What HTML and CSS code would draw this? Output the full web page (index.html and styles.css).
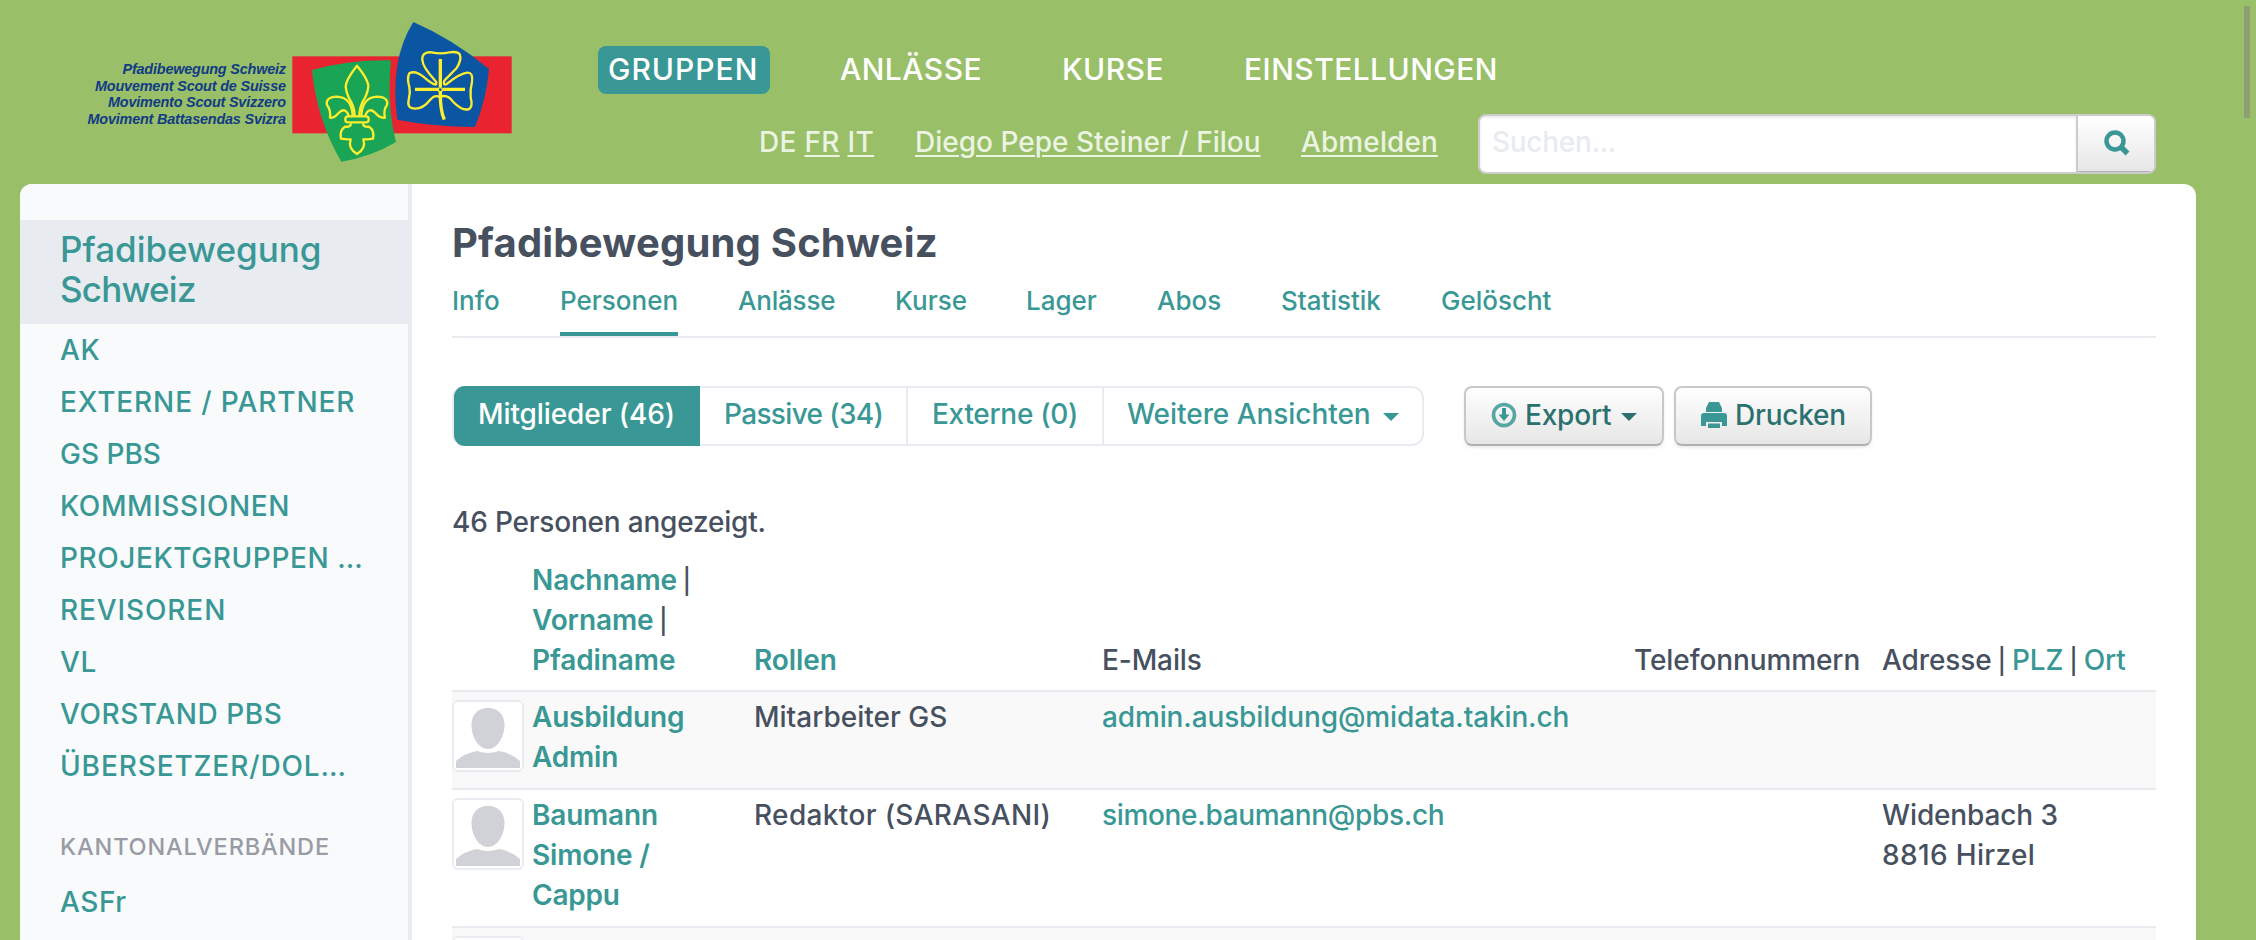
FILE: index.html
```html
<!DOCTYPE html>
<html lang="de">
<head>
<meta charset="utf-8">
<title>Pfadibewegung Schweiz</title>
<link rel="stylesheet" href="styles.css">
</head>
<body>
<header class="header">
  <svg class="logo" width="560" height="184" viewBox="0 0 560 184">
    <g class="logo-text">
      <text x="122.5" y="74" textLength="163.5">Pfadibewegung Schweiz</text>
      <text x="95" y="91" textLength="191">Mouvement Scout de Suisse</text>
      <text x="108" y="107" textLength="178">Movimento Scout Svizzero</text>
      <text x="87.5" y="124" textLength="198.5">Moviment Battasendas Svizra</text>
    </g>
    <g transform="translate(280 10) scale(.33333)">
      <rect x="37" y="139" width="658" height="231" fill="#ea2330"/>
      <path fill="#1aa455" d="M96 180Q210 148 333 151Q320 285 348 396Q275 440 184 455Q110 330 96 180Z"/>
      <path fill="#0b56a3" d="M400 36Q520 88 627 177Q620 265 585 351Q460 350 352 329Q328 150 400 36Z"/>
      <g fill="none" stroke="#fcee2e" stroke-width="7" stroke-linejoin="round">
        <path d="M224 320Q224 296 213 275Q200 255 197 230Q197 210 231 167Q266 210 265 230Q262 255 248 275Q238 295 238 320"/>
        <path d="M218 318Q216 262 170 260Q135 262 141 285Q153 300 150 323Q163 325 175 310Q195 288 207 318"/>
        <path d="M244 318Q246 262 292 260Q327 262 321 285Q309 300 315 323Q299 325 287 310Q267 288 255 318"/>
        <rect x="196" y="319" width="70" height="18" rx="8"/>
        <path d="M213 340Q213 352 195 350Q178 360 183 386Q198 389 212 388Q203 415 231 432Q259 415 250 388Q264 389 279 386Q284 360 267 350Q249 352 249 340"/>
        <path d="M466 224Q474 220 462 208Q428 170 427 150Q425 125 455 127Q482 133 508 127Q535 123 540 135Q545 150 530 174L493 212Q488 228 500 222Q540 190 562 188Q580 187 576 215Q570 240 572 262Q580 292 565 298Q545 302 520 276Q500 250 480 262Q465 252 450 270Q430 296 405 296Q380 295 386 270Q392 250 388 230Q380 205 388 190Q405 180 430 200Q455 222 466 224Z"/>
        <g stroke-width="10"><path d="M405 238H474M488 238H555M481 147V231M481 246Q480 300 493 329"/></g>
        <circle cx="481" cy="239" r="6" stroke-width="4"/>
      </g>
    </g>
  </svg>
  <div class="header-right">
    <nav class="nav">
      <a class="nav-link active t1">GRUPPEN</a>
      <a class="nav-link t2">ANLÄSSE</a>
      <a class="nav-link t3">KURSE</a>
      <a class="nav-link t4">EINSTELLUNGEN</a>
    </nav>
    <div class="meta">
      <span class="langs">DE <a>FR</a> <a>IT</a></span>
      <span class="user"><a>Diego Pepe Steiner / Filou</a></span>
      <span class="logout"><a>Abmelden</a></span>
      <div class="search">
        <div class="search-input">Suchen...</div>
        <div class="search-btn">
          <svg width="26" height="26" viewBox="0 0 26 26" fill="none" stroke="#399895"><circle cx="11" cy="11" r="8.500" stroke-width="4.500"/><path d="M17 17l6.500 6.500" stroke-width="5.500"/></svg>
        </div>
      </div>
    </div>
  </div>
  <div class="scrollbar"></div>
</header>
<div class="panel">
  <aside class="sidebar">
    <a class="side-title">Pfadibewegung<br><span class="narrow">Schweiz</span></a>
    <a class="side-item">AK</a>
    <a class="side-item wide">EXTERNE / PARTNER</a>
    <a class="side-item tight">GS PBS</a>
    <a class="side-item">KOMMISSIONEN</a>
    <a class="side-item">PROJEKTGRUPPEN …</a>
    <a class="side-item wide">REVISOREN</a>
    <a class="side-item">VL</a>
    <a class="side-item">VORSTAND PBS</a>
    <a class="side-item wide">ÜBERSETZER/DOL…</a>
    <div class="side-heading">KANTONALVERBÄNDE</div>
    <a class="side-item">ASFr</a>
  </aside>
  <main class="main">
    <h1 class="title">Pfadibewegung Schweiz</h1>
    <nav class="tabs">
      <a class="w-info">Info</a><a class="w-pers active">Personen</a><a class="w-anl">Anlässe</a><a class="w-kurse">Kurse</a><a class="w-lager">Lager</a><a class="w-abos">Abos</a><a class="w-stat">Statistik</a><a>Gelöscht</a>
    </nav>
    <div class="toolbar">
      <div class="pills">
        <a class="pill p1 active">Mitglieder (46)</a><a class="pill p2">Passive (34)</a><a class="pill p3">Externe (0)</a><a class="pill p4">Weitere Ansichten<i class="caret"></i></a>
      </div>
      <a class="btn b1">
        <svg width="26" height="26" viewBox="0 0 26 26" fill="none" stroke="#399895"><circle cx="13" cy="13" r="10.500" stroke-width="3.600" opacity=".85"/><path d="M13 6v8" stroke-width="4"/><path d="M7.500 12.500h11L13 19z" fill="#399895" stroke="none"/></svg>
        <span>Export</span><i class="caret"></i>
      </a>
      <a class="btn b2">
        <svg width="26" height="26" viewBox="0 0 26 26" fill="#399895"><path d="M8 0h10l3 6v4H5V6zM3 11h20q3 0 3 3v10h-5v-4H5v4H0V14q0-3 3-3zM7 21.500h12V26H7z"/></svg>
        <span>Drucken</span>
      </a>
    </div>
    <p class="count">46 Personen angezeigt.</p>
    <div class="row head">
      <div></div>
      <div><a>Nachname</a> <i class="bar">|</i><br><a>Vorname</a> <i class="bar">|</i><br><a>Pfadiname</a></div>
      <div><a>Rollen</a></div>
      <div class="m">E-Mails</div>
      <div class="m">Telefonnummern</div>
      <div class="m">Adresse <i class="bar">|</i> <a>PLZ</a> <i class="bar">|</i> <a>Ort</a></div>
    </div>
    <div class="row r1">
      <div class="avatar"><svg width="64" height="64" viewBox="0 0 64 64" fill="#d1d2d8"><path d="M32 4C43 4 49 12 48.500 22C48 34 41 45 32 45S16 34 15.500 22C15 12 21 4 32 4ZM0 65V57Q9 49 21 47Q32 51 43 47Q55 49 64 57V65Z"/></svg></div>
      <div class="name">Ausbildung<br>Admin</div>
      <div>Mitarbeiter GS</div>
      <div class="mail"><a>admin.ausbildung@midata.takin.ch</a></div>
      <div></div>
      <div></div>
    </div>
    <div class="row r2">
      <div class="avatar"><svg width="64" height="64" viewBox="0 0 64 64" fill="#d1d2d8"><path d="M32 4C43 4 49 12 48.500 22C48 34 41 45 32 45S16 34 15.500 22C15 12 21 4 32 4ZM0 65V57Q9 49 21 47Q32 51 43 47Q55 49 64 57V65Z"/></svg></div>
      <div class="name">Baumann<br>Simone /<br>Cappu</div>
      <div class="caps">Redaktor (SARASANI)</div>
      <div class="mail short"><a>simone.baumann@pbs.ch</a></div>
      <div></div>
      <div><span class="mail">Widenbach 3</span><br><span class="caps">8816 Hirzel</span></div>
    </div>
    <div class="row r1">
      <div class="avatar"></div>
    </div>
  </main>
</div>
</body>
</html>
```
FILE: styles.css
```css
* { box-sizing: border-box; }
body {
  margin: 0;
  height: 940px;
  overflow: hidden;
  background: #99bf68;
  color: #47505f;
  font: 450 28px/40px Inter, "Open Sans", sans-serif;
}
a { color: #399895; }
.header { display: flex; height: 184px; position: relative; }
.logo { flex: none; }
.logo-text { font: italic bold 14.4px "Liberation Sans", Arial, sans-serif; fill: #113b85; }
.header-right { width: 1596px; padding-top: 46px; }
.nav { display: flex; padding-left: 38px; height: 68px; }
.nav-link { height: 48px; line-height: 46px; padding-left: 10px; font-size: 30px; font-weight: 500; color: #fff; border-radius: 8px; white-space: nowrap; letter-spacing: .45px; }
.nav-link.active { background: #399895; }
.t1 { width: 172px; margin-right: 60px; letter-spacing: 1px; }
.t2 { width: 222px; }
.t3 { width: 182px; }
.meta { display: flex; height: 60px; line-height: 57px; color: #ebf3e1; padding-left: 199px; white-space: nowrap; }
.meta a { color: #ebf3e1; text-decoration: underline; text-underline-offset: 3px; text-decoration-thickness: 2px; }
.langs { width: 156px; letter-spacing: .3px; }
.user { width: 386px; }
.logout { width: 177px; letter-spacing: .1px; }
.search { display: flex; width: 678px; border: 2px solid #ccc; border-radius: 8px; overflow: hidden; background: #fff; }
.search-input { flex: 1; padding-left: 12px; line-height: 53px; color: #e8ebf0; letter-spacing: -.3px; box-shadow: inset 0 2px 3px rgba(0,0,0,.08); }
.search-btn { width: 78px; border-left: 2px solid #ccc; background: linear-gradient(#fff, #e6e6e6); display: flex; align-items: center; justify-content: center; padding: 0 0 3px 1px; box-shadow: inset 0 -1px #b3b3b3; }
.scrollbar { position: absolute; left: 2244px; top: 6px; width: 6px; height: 112px; background: #8d9f70; }
.panel { display: flex; width: 2176px; height: 756px; margin-left: 20px; background: #fff; border-radius: 12px 12px 0 0; overflow: hidden; }
.sidebar { width: 392px; flex: none; background: linear-gradient(90deg, #f8fafc 388px, #e8ebf0 388px); padding-top: 36px; }
.sidebar a { display: block; padding-left: 40px; font-weight: 500; }
.side-title { height: 104px; padding-top: 9px; font-size: 35px; background: #e8ebf0; }
.narrow { letter-spacing: -.8px; }
.sidebar .side-item { height: 52px; line-height: 52px; white-space: nowrap; letter-spacing: .58px; }
.sidebar .wide { letter-spacing: .88px; }
.sidebar .tight { letter-spacing: 0; }
.side-heading { height: 84px; padding: 30px 0 0 40px; font-size: 23.500px; color: #999ba5; font-weight: 500; line-height: 49px; letter-spacing: .85px; }
.main { width: 1744px; padding: 36px 0 0 40px; }
.main > * { width: 1704px; }
.title { margin: 0; height: 60px; line-height: 46px; font-size: 40px; font-weight: 700; letter-spacing: .2px; }
.tabs { display: flex; height: 58px; border-bottom: 2px solid #e8ebf0; font-size: 26px; font-weight: 500; line-height: 42px; gap: 60px; }
.tabs a { height: 56px; white-space: nowrap; }
.tabs .active { border-bottom: 4px solid #399895; }
.w-info { width: 48px; }
.w-pers { width: 118px; }
.w-anl { width: 97px; letter-spacing: -.2px; }
.w-kurse { width: 71px; }
.w-lager { width: 71px; }
.w-abos { width: 64px; }
.w-stat { width: 100px; }
.toolbar { display: flex; height: 108px; margin-top: 48px; line-height: 52px; font-weight: 500; }
.pills { display: flex; width: 972px; height: 60px; border: 2px solid #e8ebf0; border-radius: 12px; margin-right: 40px; }
.pill { padding-left: 24px; border-left: 2px solid #e8ebf0; white-space: nowrap; }
.p1 { width: 246px; padding-left: 24px; background: #399895; color: #fff; border: 0; height: 60px; margin-top: -2px; line-height: 56px; border-radius: 11px 0 0 11px; letter-spacing: -.1px; }
.p2 { width: 206px; border: 0; letter-spacing: -.65px; }
.p3 { width: 196px; letter-spacing: -.3px; }
.p4 { flex: 1; padding-left: 23px; letter-spacing: -.05px; }
.caret { display: inline-block; border: 8px solid transparent; border-top-color: currentColor; border-bottom: 0; vertical-align: 3px; margin-left: 12px; }
.btn { display: flex; align-items: center; height: 60px; border: 2px solid #c8c8c8; border-bottom-color: #b0b0b0; border-radius: 8px; background: linear-gradient(#fff, #e6e6e6); color: #2b716f; box-shadow: 0 2px 3px rgba(0,0,0,.08); padding-left: 25px; margin-right: 10px; padding-bottom: 3px; }
.btn span { margin-left: 8px; letter-spacing: -.2px; }
.btn .caret { margin-left: 10px; margin-top: 4px; }
.b1 { width: 200px; }
.b2 { width: 198px; }
.count { margin: 0; height: 64px; line-height: 56px; letter-spacing: -.2px; }
.row { display: grid; grid-template-columns: 80px 222px 348px 532px 248px 1fr; border-top: 2px solid #e8ebf0; white-space: nowrap; padding-top: 5px; }
.head { border: 0; height: 132px; padding: 0 0 10px; align-items: end; font-weight: 600; letter-spacing: -.1px; }
.head .m { font-weight: 500; }
.bar { font-style: normal; font-weight: 500; font-size: 25px; line-height: 0; margin: 0 -1.500px; }
.head .m a { font-weight: 550; }
.r1 { height: 98px; background: #f9f9f9; }
.r2 { height: 138px; }
.avatar { width: 72px; height: 72px; margin-top: 3px; padding: 2px; border: 2px solid #e8ebf0; border-radius: 6px; background: #fff; }
.avatar svg { display: block; }
.name { font-weight: 600; color: #399895; letter-spacing: -.2px; }
.caps { letter-spacing: .35px; }
.mail { letter-spacing: -.13px; }
.short { letter-spacing: -.33px; }
```
